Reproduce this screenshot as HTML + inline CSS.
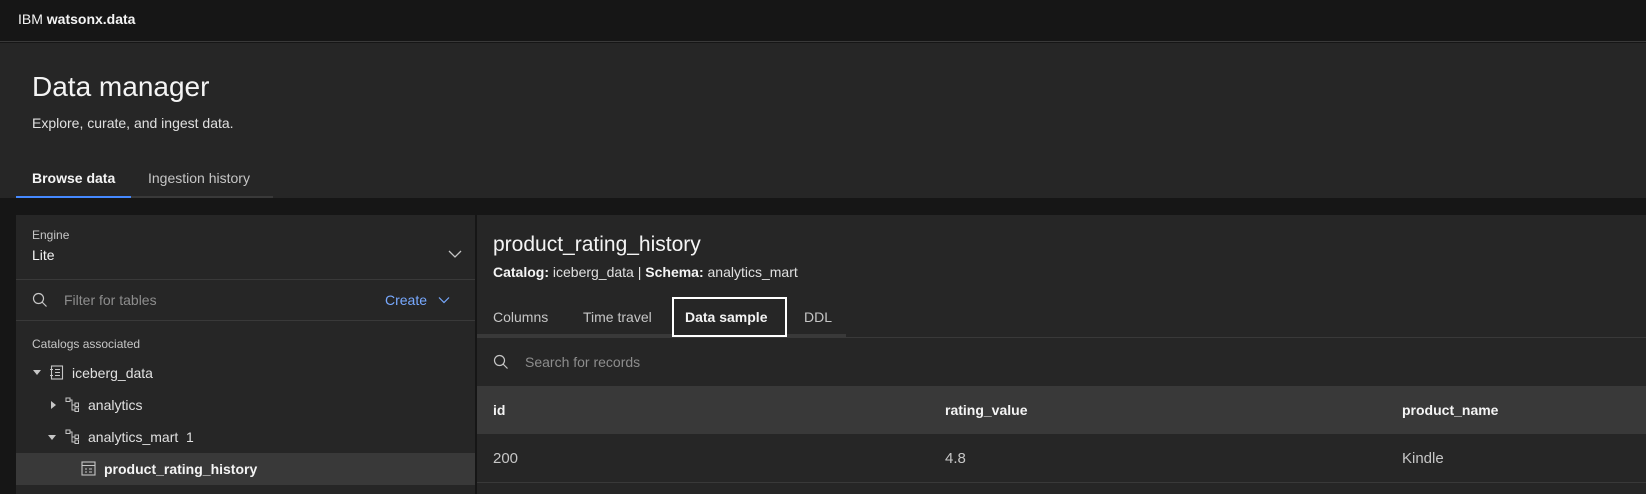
<!DOCTYPE html>
<html><head><meta charset="utf-8"><style>
*{margin:0;padding:0;box-sizing:border-box}
body{width:1646px;height:494px;overflow:hidden;background:#161616;font-family:"Liberation Sans",sans-serif;color:#f4f4f4;position:relative}
.a{position:absolute;white-space:nowrap}
svg{position:absolute}
</style></head><body>
<div class="a" style="left:0;top:0;width:1646px;height:42px;background:#161616;border-bottom:1px solid #393939"></div>
<div class="a" style="left:18px;top:11px;font-size:14px;color:#f4f4f4">IBM <b>watsonx.data</b></div>
<div class="a" style="left:0;top:43px;width:1646px;height:155px;background:#262626"></div>
<div class="a" style="left:32px;top:71px;font-size:28px;font-weight:300;color:#f4f4f4">Data manager</div>
<div class="a" style="left:32px;top:115px;font-size:14px;color:#e0e0e0">Explore, curate, and ingest data.</div>
<div class="a" style="left:32px;top:170px;font-size:14px;font-weight:bold">Browse data</div>
<div class="a" style="left:148px;top:170px;font-size:14px;color:#c6c6c6">Ingestion history</div>
<div class="a" style="left:16px;top:196px;width:115px;height:2px;background:#4589ff"></div>
<div class="a" style="left:131px;top:196px;width:142px;height:2px;background:#393939"></div>

<div class="a" style="left:16px;top:215px;width:459px;height:279px;background:#262626"></div>
<div class="a" style="left:32px;top:228px;font-size:12px;color:#c6c6c6">Engine</div>
<div class="a" style="left:32px;top:247px;font-size:14px">Lite</div>
<svg style="left:448px;top:249px" width="14" height="10"><path d="M1 2l6 6 6-6" stroke="#c6c6c6" fill="none" stroke-width="1.3"/></svg>
<div class="a" style="left:16px;top:279px;width:459px;height:1px;background:#393939"></div>
<svg style="left:32px;top:292px" width="16" height="16"><circle cx="6.5" cy="6.5" r="5" stroke="#c6c6c6" fill="none" stroke-width="1.2"/><path d="M10 10l4.5 4.5" stroke="#c6c6c6" stroke-width="1.2"/></svg>
<div class="a" style="left:64px;top:292px;font-size:14px;color:#8d8d8d">Filter for tables</div>
<div class="a" style="left:385px;top:292px;font-size:14px;color:#78a9ff">Create</div>
<svg style="left:438px;top:296px" width="12" height="8"><path d="M1 1.5l5 5 5-5" stroke="#78a9ff" fill="none" stroke-width="1.2"/></svg>
<div class="a" style="left:16px;top:320px;width:459px;height:1px;background:#393939"></div>
<div class="a" style="left:32px;top:337px;font-size:12px;color:#c6c6c6">Catalogs associated</div>
<svg style="left:32px;top:369px" width="10" height="8"><path d="M1 1h8l-4 5z" fill="#c6c6c6"/></svg>
<svg style="left:50px;top:365px" width="14" height="16"><rect x="1.5" y="1" width="11" height="13" stroke="#c6c6c6" fill="none" stroke-width="1.1"/><path d="M5 4.5h5M5 7.5h5M5 10.5h5M0 4.5h3M0 10.5h3" stroke="#c6c6c6" stroke-width="1"/></svg>
<div class="a" style="left:72px;top:365px;font-size:14px;color:#e0e0e0">iceberg_data</div>
<svg style="left:50px;top:400px" width="8" height="10"><path d="M1 1v8l5-4z" fill="#c6c6c6"/></svg>
<svg style="left:65px;top:397px" width="16" height="16"><rect x="1" y="1" width="4" height="3.5" stroke="#c6c6c6" fill="none"/><path d="M5 3h2v10h3M7 8h3" stroke="#c6c6c6" fill="none"/><rect x="10" y="6" width="3.5" height="3.5" stroke="#c6c6c6" fill="none"/><rect x="10" y="11" width="3.5" height="3.5" stroke="#c6c6c6" fill="none"/></svg>
<div class="a" style="left:88px;top:397px;font-size:14px;color:#e0e0e0">analytics</div>
<svg style="left:47px;top:434px" width="10" height="8"><path d="M1 1h8l-4 5z" fill="#c6c6c6"/></svg>
<svg style="left:65px;top:429px" width="16" height="16"><rect x="1" y="1" width="4" height="3.5" stroke="#c6c6c6" fill="none"/><path d="M5 3h2v10h3M7 8h3" stroke="#c6c6c6" fill="none"/><rect x="10" y="6" width="3.5" height="3.5" stroke="#c6c6c6" fill="none"/><rect x="10" y="11" width="3.5" height="3.5" stroke="#c6c6c6" fill="none"/></svg>
<div class="a" style="left:88px;top:429px;font-size:14px;color:#e0e0e0">analytics_mart&nbsp;&nbsp;1</div>
<div class="a" style="left:16px;top:453px;width:459px;height:32px;background:#393939"></div>
<svg style="left:81px;top:461px" width="15" height="15"><rect x="1" y="1" width="13" height="13" stroke="#c6c6c6" fill="none" stroke-width="1.1"/><path d="M1 4.5h13M4 8h2M8 8h3M4 11h2M8 11h3" stroke="#c6c6c6"/></svg>
<div class="a" style="left:104px;top:461px;font-size:14px;font-weight:bold">product_rating_history</div>

<div class="a" style="left:477px;top:215px;width:1169px;height:279px;background:#262626"></div>
<div class="a" style="left:493px;top:233px;font-size:21px;color:#f4f4f4">product_rating_history</div>
<div class="a" style="left:493px;top:264px;font-size:14px;color:#e0e0e0"><b style="color:#f4f4f4">Catalog:</b> iceberg_data | <b style="color:#f4f4f4">Schema:</b> analytics_mart</div>
<div class="a" style="left:477px;top:337px;width:1169px;height:1px;background:#393939"></div>
<div class="a" style="left:477px;top:334px;width:369px;height:3px;background:#393939"></div>
<div class="a" style="left:493px;top:309px;font-size:14px;color:#c6c6c6">Columns</div>
<div class="a" style="left:583px;top:309px;font-size:14px;color:#c6c6c6">Time travel</div>
<div class="a" style="left:672px;top:297px;width:115px;height:40px;border:2px solid #fff;background:#262626"></div>
<div class="a" style="left:685px;top:309px;font-size:14px;font-weight:bold">Data sample</div>
<div class="a" style="left:804px;top:309px;font-size:14px;color:#c6c6c6">DDL</div>
<svg style="left:493px;top:354px" width="16" height="16"><circle cx="6.5" cy="6.5" r="5" stroke="#c6c6c6" fill="none" stroke-width="1.2"/><path d="M10 10l4.5 4.5" stroke="#c6c6c6" stroke-width="1.2"/></svg>
<div class="a" style="left:525px;top:354px;font-size:14px;color:#8d8d8d">Search for records</div>
<div class="a" style="left:477px;top:386px;width:1169px;height:48px;background:#393939"></div>
<div class="a" style="left:493px;top:402px;font-size:14px;font-weight:bold">id</div>
<div class="a" style="left:945px;top:402px;font-size:14px;font-weight:bold">rating_value</div>
<div class="a" style="left:1402px;top:402px;font-size:14px;font-weight:bold">product_name</div>
<div class="a" style="left:493px;top:450px;font-size:15px;color:#c6c6c6">200</div>
<div class="a" style="left:945px;top:450px;font-size:15px;color:#c6c6c6">4.8</div>
<div class="a" style="left:1402px;top:450px;font-size:15px;color:#c6c6c6">Kindle</div>
<div class="a" style="left:477px;top:482px;width:1169px;height:1px;background:#393939"></div>
</body></html>
